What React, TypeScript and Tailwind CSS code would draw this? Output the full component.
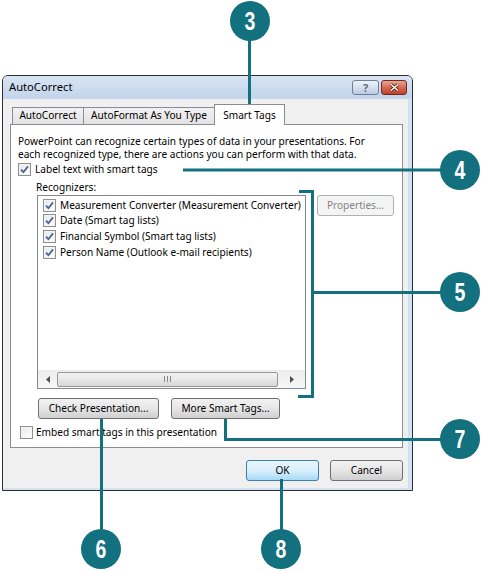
import React from "react";

const TEAL = "#13707f";

function CheckBox({ checked }: { checked?: boolean }) {
  return (
    <span className="inline-flex h-[13px] w-[13px] shrink-0 items-center justify-center border border-[#8e8f8f] bg-gradient-to-br from-[#dcdcdc] to-[#fbfbfb]">
      <span className="flex h-[11px] w-[11px] items-center justify-center border border-[#f4f4f4] bg-gradient-to-br from-[#e8e8e8] to-white">
        {checked && (
          <svg width="9" height="9" viewBox="0 0 9 9">
            <path d="M1 4.6 L3.4 7.2 L8 1.4" fill="none" stroke="#4a6392" strokeWidth="1.8" />
          </svg>
        )}
      </span>
    </span>
  );
}

function Button({ label, w, isDefault, disabled }: { label: string; w: string; isDefault?: boolean; disabled?: boolean }) {
  return (
    <div
      className={[
        "flex h-[21px] items-center justify-center rounded-[3px] border",
        w,
        isDefault
          ? "border-[#3c7fb1] bg-gradient-to-b from-[#eaf6fd] via-[#d9f0fc] to-[#a7d9f5] text-black"
          : disabled
            ? "border-[#adb2b5] bg-[#f4f4f4] text-[#838383]"
            : "border-[#707070] bg-gradient-to-b from-[#f2f2f2] via-[#e6e6e6] to-[#cfcfcf] text-black",
      ].join(" ")}
    >
      {label}
    </div>
  );
}

const recognizers = [
  "Measurement Converter (Measurement Converter)",
  "Date (Smart tag lists)",
  "Financial Symbol (Smart tag lists)",
  "Person Name (Outlook e-mail recipients)",
];

function Callout({ n, cx, cy }: { n: string; cx: number; cy: number }) {
  return (
    <g>
      <circle cx={cx} cy={cy} r="20" fill={TEAL} />
      <text
        transform={`translate(${cx} ${cy + 9}) scale(0.78 1)`}
        textAnchor="middle"
        fontFamily="'Liberation Sans', Arial, sans-serif"
        fontWeight="bold"
        fontSize="25"
        fill="white"
      >
        {n}
      </text>
    </g>
  );
}

export default function App() {
  return (
    <div className="relative h-[571px] w-[481px] overflow-hidden bg-white text-[10.1px] text-black [font-family:'Noto_Sans',sans-serif]">
      {/* Dialog window */}
      <div className="ml-[2px] mt-[75px] flex h-[416px] w-[411px] flex-col overflow-hidden rounded-t-[6px] border border-[#2a2d33]">
        {/* Title bar */}
        <div className="flex h-[23px] shrink-0 items-center justify-between bg-gradient-to-b from-[#d8e5f4] to-[#c2d4eb] pl-[6px] pr-[5px]">
          <span className="text-[11.2px] text-black">AutoCorrect</span>
          <div className="flex items-center gap-[2px]">
            <div className="flex h-[15px] w-[27px] items-center justify-center rounded-[3px] border border-[#6f7f97] bg-gradient-to-b from-[#eef3fa] to-[#bccbe0]">
              <span className="text-[11px] font-bold leading-none text-[#5a6b85]">?</span>
            </div>
            <div className="flex h-[15px] w-[26px] items-center justify-center rounded-[3px] border border-[#6d2a1e] bg-gradient-to-b from-[#e9a797] via-[#d56a52] to-[#c2402a]">
              <svg width="11" height="9" viewBox="0 0 11 9">
                <path d="M2 1.5 L9 7.5 M9 1.5 L2 7.5" stroke="#5a1d12" strokeWidth="3" />
                <path d="M2 1.5 L9 7.5 M9 1.5 L2 7.5" stroke="white" strokeWidth="1.6" />
              </svg>
            </div>
          </div>
        </div>

        {/* Body */}
        <div className="flex flex-1 flex-col border-b-[2px] border-r-[4px] border-[#d3e2f3] bg-[#f0f0f0] pl-[7px] pr-[5px] pt-[5px]">
          {/* Tabs */}
          <div className="relative z-10 -mb-px flex items-end pl-[2px]">
            <div className="flex h-[18px] w-[72px] items-center justify-center border border-[#898c95] bg-gradient-to-b from-[#f2f2f2] to-[#e3e3e3]">
              AutoCorrect
            </div>
            <div className="-ml-px flex h-[18px] w-[132px] items-center justify-center border border-[#898c95] bg-gradient-to-b from-[#f2f2f2] to-[#e3e3e3]">
              AutoFormat As You Type
            </div>
            <div className="-ml-px flex h-[21px] w-[71px] items-start justify-center border-x border-t border-[#898c95] bg-white pt-[3px]">
              Smart Tags
            </div>
          </div>

          {/* Tab panel */}
          <div className="flex h-[324px] flex-col border border-[#898c95] bg-white pl-[7px]">
            <p className="mt-[10px] leading-[12.5px]">
              PowerPoint can recognize certain types of data in your presentations. For
              <br />
              each recognized type, there are actions you can perform with that data.
            </p>
            <label className="mt-[2px] flex items-center gap-[4px]">
              <CheckBox checked />
              <span>Label text with smart tags</span>
            </label>
            <div className="ml-[18px] mt-[3px]">Recognizers:</div>
            <div className="ml-[19px] flex items-start gap-[11px]">
              <div className="flex h-[194px] w-[269px] flex-col border border-[#828790] bg-white">
                <div className="flex flex-1 flex-col pl-[5px] pt-[1px]">
                  {recognizers.map((r) => (
                    <div key={r} className="flex h-[15.7px] items-center gap-[4px] whitespace-nowrap">
                      <CheckBox checked />
                      <span>{r}</span>
                    </div>
                  ))}
                </div>
                {/* Horizontal scrollbar */}
                <div className="flex h-[18px] items-center bg-gradient-to-b from-[#ececec] to-[#f8f8f8]">
                  <div className="flex w-[19px] justify-center">
                    <svg width="4" height="7" viewBox="0 0 4 7">
                      <path d="M4 0 L0 3.5 L4 7 Z" fill="#4d4d4d" />
                    </svg>
                  </div>
                  <div className="flex h-[15px] w-[221px] items-center justify-center rounded-[2px] border border-[#979797] bg-gradient-to-b from-[#f3f3f3] via-[#e8e8e8] to-[#d6d6d6]">
                    <div className="flex gap-[2px]">
                      <span className="h-[6px] w-px bg-[#8a8a8a]" />
                      <span className="h-[6px] w-px bg-[#8a8a8a]" />
                      <span className="h-[6px] w-px bg-[#8a8a8a]" />
                    </div>
                  </div>
                  <div className="flex flex-1 justify-center">
                    <svg width="4" height="7" viewBox="0 0 4 7">
                      <path d="M0 0 L4 3.5 L0 7 Z" fill="#4d4d4d" />
                    </svg>
                  </div>
                </div>
              </div>
              <Button label="Properties..." w="w-[77px]" disabled />
            </div>
            <div className="ml-[20px] mt-[9px] flex gap-[12px]">
              <Button label="Check Presentation..." w="w-[121px]" />
              <Button label="More Smart Tags..." w="w-[109px]" />
            </div>
            <label className="ml-[2px] mt-[6px] flex items-center gap-[3px]">
              <CheckBox />
              <span>Embed smart tags in this presentation</span>
            </label>
          </div>

          {/* Dialog buttons */}
          <div className="mt-[12px] flex justify-end gap-[11px]">
            <Button label="OK" w="w-[73px]" isDefault />
            <Button label="Cancel" w="w-[73px]" />
          </div>
        </div>
      </div>

      {/* Callout annotations */}
      <svg className="pointer-events-none absolute left-0 top-0" width="481" height="571" viewBox="0 0 481 571">
        <g stroke={TEAL} strokeWidth="3" fill="none">
          <path d="M249.5 40 V108" />
          <path d="M183 170 H442" />
          <path d="M299 191.5 H312.5 V396.5 H298 M312.5 292.5 H442" />
          <path d="M225.5 419 V439.5 H442" />
          <path d="M101.5 419 V530" />
          <path d="M281.5 479 V530" />
        </g>
        <Callout n="3" cx={250} cy={21} />
        <Callout n="4" cx={460} cy={170} />
        <Callout n="5" cx={460} cy={292} />
        <Callout n="7" cx={460} cy={439} />
        <Callout n="6" cx={101} cy={549} />
        <Callout n="8" cx={281} cy={549} />
      </svg>
    </div>
  );
}
